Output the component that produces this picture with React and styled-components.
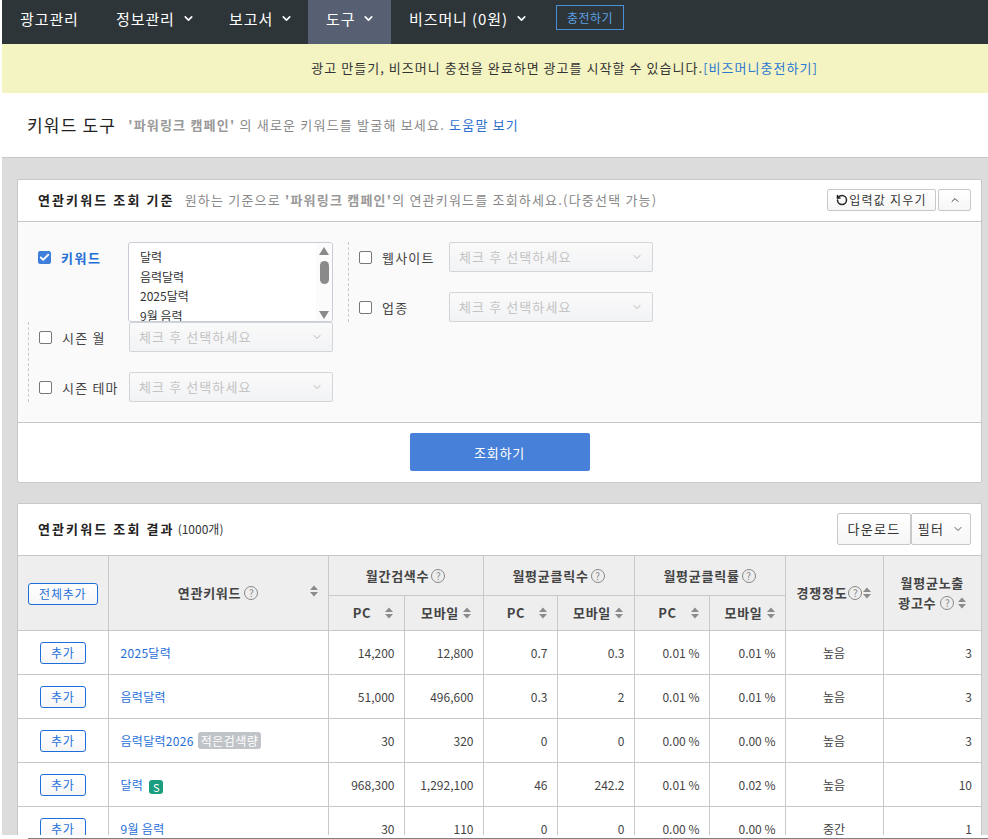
import React from "react";
import styled, { createGlobalStyle } from "styled-components";
import { ChevronDown, ChevronUp, RotateCcw, Check } from "lucide-react";

const GlobalStyle = createGlobalStyle`
  html, body {
    margin: 0;
    padding: 0;
    height: 839px;
    overflow: hidden;
    background: #fff;
    font-family: "Noto Sans CJK KR", "Liberation Sans", sans-serif;
    font-size: 13px;
    color: #333;
  }
  * { box-sizing: border-box; }
`;

const Page = styled.div`
  height: 839px;
  display: flex;
  flex-direction: column;
`;
const Main = styled.div`
  height: 835px;
  margin-left: 2px;
  background: #dcdcdc;
  overflow: hidden;
`;
const ScrollEdge = styled.div`
  height: 4px;
  margin-left: 28px;
  background: #fff;
  border-bottom: 1px solid #808080;
`;

const Nav = styled.nav`
  height: 44px;
  background: #2e3539;
  display: flex;
  align-items: stretch;
`;
const NavItem = styled.a`
  width: ${(p) => p.$width};
  display: flex;
  align-items: center;
  gap: 7px;
  padding: 0 0 8px 18px;
  color: #fff;
  font-size: 15px;
  letter-spacing: 0.9px;
  white-space: nowrap;
  background: ${(p) => (p.$active ? "#566072" : "transparent")};
`;
const ChargeButton = styled.a`
  align-self: flex-start;
  margin: 5px 0 0 0;
  width: 68px;
  height: 25px;
  border: 1px solid #4a90d9;
  color: #5aa2e6;
  font-size: 12px;
  letter-spacing: 0.5px;
  display: flex;
  align-items: center;
  justify-content: center;
`;

const Notice = styled.div`
  height: 49px;
  background: #f4f4c2;
  display: flex;
  align-items: center;
  justify-content: flex-end;
  padding: 0 170px 2px 0;
  font-size: 13px;
  letter-spacing: 1.04px;
  color: #333;
`;
const NoticeLink = styled.a`
  color: #2a78d2;
`;

const TitleBar = styled.div`
  height: 65px;
  background: #fff;
  border-bottom: 1px solid #c8c8c8;
  display: flex;
  align-items: center;
  padding: 0 0 2px 25px;
`;
const PageTitle = styled.h1`
  margin: 0 12px 0 0;
  font-size: 17px;
  font-weight: 400;
  color: #222;
  letter-spacing: 1.2px;
`;
const TitleDesc = styled.span`
  font-size: 13px;
  color: #888;
  letter-spacing: 1.2px;
`;
const Campaign = styled.b`
  color: #999;
  font-weight: 700;
`;
const HelpLink = styled.a`
  color: #2a6fd0;
`;

const Card = styled.section`
  margin: ${(p) => p.$margin};
  width: 965px;
  background: #fff;
  border: 1px solid #c8c8c8;
  border-radius: 2px;
`;
const CardHead = styled.div`
  height: ${(p) => p.$height};
  padding: 0 10px 2px 20px;
  display: flex;
  align-items: center;
`;
const CardTitle = styled.h2`
  margin: 0 10px 0 0;
  font-size: 13px;
  font-weight: 700;
  color: #222;
  letter-spacing: 2.1px;
`;
const Count = styled.span`
  margin-left: -7px;
  font-size: 12px;
  color: #333;
`;
const CardDesc = styled.span`
  font-size: 13px;
  color: #888;
  letter-spacing: 1.2px;
`;
const HeadActions = styled.div`
  margin-left: auto;
  display: flex;
  gap: ${(p) => p.$gap || "0"};
`;
const GhostButton = styled.button`
  height: ${(p) => p.$height || "22px"};
  width: ${(p) => p.$width};
  padding: 0;
  font: inherit;
  font-size: ${(p) => p.$size || "12px"};
  letter-spacing: 1.25px;
  color: #333;
  background: linear-gradient(#fff, #f6f6f6);
  border: 1px solid #c8c8c8;
  border-radius: 2px;
  display: flex;
  align-items: center;
  justify-content: center;
  gap: ${(p) => p.$gap || "1px"};
`;

const FormBody = styled.div`
  height: 202px;
  padding-top: 20px;
  background: #fafafa;
  border-top: 1px solid #c8c8c8;
  border-bottom: 1px solid #c8c8c8;
`;
const TopRow = styled.div`
  display: flex;
  padding-left: 20px;
`;
const KeywordField = styled.div`
  width: 295px;
  display: flex;
`;
const KeywordLabel = styled.label`
  width: 90px;
  height: 30px;
  display: flex;
  align-items: center;
  gap: 10px;
  font-weight: 700;
  letter-spacing: 1.6px;
  color: #1f6fd8;
`;
const ListBox = styled.div`
  width: 205px;
  height: 80px;
  background: #fff;
  border: 1px solid #c8ccd6;
  border-radius: 3px;
  display: flex;
  overflow: hidden;
`;
const ListItems = styled.div`
  flex: 1;
  padding: 4px 0 0 11px;
  font-size: 12px;
  line-height: 19.6px;
  color: #333;
`;
const ListItem = styled.div`
  white-space: nowrap;
`;
const ScrollTrack = styled.div`
  width: 16px;
  padding: 4px 0 2px;
  display: flex;
  flex-direction: column;
  align-items: center;
  background: #fbfbfb;
`;
const ScrollThumb = styled.div`
  width: 9px;
  height: 23px;
  margin-top: 6px;
  border-radius: 5px;
  background: #8a8a8a;
`;
const ScrollArrow = styled.svg`
  width: 10px;
  height: 8px;
  fill: #8a8a8a;
  margin-top: ${(p) => (p.$down ? "auto" : "0")};
`;
const DashedGroup = styled.div`
  margin-left: ${(p) => p.$left};
  padding-left: 10px;
  border-left: 1px dashed #c8c8c8;
  display: flex;
  flex-direction: column;
  gap: 20px;
`;
const FieldRow = styled.div`
  height: 30px;
  display: flex;
  align-items: center;
`;
const FieldLabel = styled.label`
  width: ${(p) => p.$width};
  display: flex;
  align-items: center;
  gap: 10px;
  letter-spacing: 1.2px;
  color: #444;
  white-space: nowrap;
`;
const Box = styled.span`
  width: 13px;
  height: 13px;
  border-radius: 2px;
  flex: none;
  display: flex;
  align-items: center;
  justify-content: center;
  background: ${(p) => (p.$checked ? "#3f7fdc" : "#fff")};
  border: 1px solid ${(p) => (p.$checked ? "#3f7fdc" : "#777")};
  color: #fff;
`;
const SelectBox = styled.div`
  width: 204px;
  height: 30px;
  padding: 0 9px 1px;
  border: 1px solid #d2d5da;
  border-radius: 2px;
  background: linear-gradient(#fafafa, #f2f3f5);
  color: #c4c4c4;
  font-size: 13px;
  letter-spacing: 1.1px;
  display: flex;
  align-items: center;
  justify-content: space-between;
`;
const CardFoot = styled.div`
  height: 59px;
  display: flex;
  align-items: flex-start;
  justify-content: center;
  padding-top: 10px;
`;
const SubmitButton = styled.button`
  width: 180px;
  height: 38px;
  border: 0;
  border-radius: 2px;
  background: #4680d8;
  color: #fff;
  font: inherit;
  font-size: 13px;
  letter-spacing: 0.8px;
`;

const Table = styled.table`
  width: 963px;
  table-layout: fixed;
  border-collapse: collapse;
  font-size: 12px;
`;
const Th = styled.th`
  position: relative;
  height: ${(p) => p.$height};
  padding: 0;
  background: #eeeeee;
  border: 1px solid #c8c8c8;
  border-left-width: ${(p) => (p.$first ? "0" : "1px")};
  border-right-width: ${(p) => (p.$last ? "0" : "1px")};
  color: #444;
  font-size: 13px;
  font-weight: 700;
  letter-spacing: 0.75px;
  line-height: 20px;
`;
const ThInner = styled.span`
  display: inline-flex;
  align-items: center;
  justify-content: center;
  gap: ${(p) => p.$gap || "2px"};
  padding-left: ${(p) => p.$shift || "0"};
`;
const Td = styled.td`
  height: 44px;
  padding: ${(p) => (p.$center ? "0" : p.$left ? "0 0 0 12px" : "0 9px 0 0")};
  text-align: ${(p) => (p.$center ? "center" : p.$left ? "left" : "right")};
  border: 1px solid #c8c8c8;
  border-left-width: ${(p) => (p.$first ? "0" : "1px")};
  border-right-width: ${(p) => (p.$last ? "0" : "1px")};
  color: #444;
  font-size: 12px;
`;
const AddButton = styled.button`
  width: ${(p) => p.$width};
  height: 22px;
  margin-top: ${(p) => p.$top || "0"};
  padding: 0;
  font: inherit;
  font-size: 12px;
  font-weight: 400;
  letter-spacing: 0.8px;
  color: #1f6fd8;
  background: linear-gradient(#fff, #f6f6f6);
  border: 1px solid #1f6fd8;
  border-radius: 3px;
`;
const KeywordLink = styled.a`
  color: #1f6fd8;
  letter-spacing: 0.3px;
`;
const LowBadge = styled.span`
  margin-left: 4px;
  padding: 0 3px;
  border-radius: 3px;
  background: #c0c4c8;
  color: #fff;
  font-size: 12px;
  letter-spacing: 0.5px;
`;
const SBadge = styled.span`
  display: inline-flex;
  align-items: center;
  justify-content: center;
  width: 14px;
  height: 14px;
  margin-left: 6px;
  border-radius: 3px;
  background: #1b9e7f;
  color: #fff;
  font-size: 11px;
  vertical-align: -2px;
`;
const HelpCircle = styled.span`
  flex: none;
  width: 14px;
  height: 14px;
  border: 1px solid #888;
  border-radius: 50%;
  color: #888;
  font-size: 10px;
  font-weight: 400;
  line-height: 12px;
  letter-spacing: 0;
  text-align: center;
`;
const SortSvg = styled.svg`
  flex: none;
  width: 8px;
  height: 12px;
  fill: #8b8b8b;
`;
const CornerSort = styled.span`
  position: absolute;
  right: ${(p) => p.$right};
  top: ${(p) => p.$top};
  line-height: 0;
`;

const Sort = () => (
  <SortSvg viewBox="0 0 8 12">
    <path d="M4 0.5 8 5H0zM0 7h8l-4 4.5z" />
  </SortSvg>
);

const rows = [
  ["2025달력", null, "14,200", "12,800", "0.7", "0.3", "0.01 %", "0.01 %", "높음", "3"],
  ["음력달력", null, "51,000", "496,600", "0.3", "2", "0.01 %", "0.01 %", "높음", "3"],
  ["음력달력2026", "low", "30", "320", "0", "0", "0.00 %", "0.00 %", "높음", "3"],
  ["달력", "s", "968,300", "1,292,100", "46", "242.2", "0.01 %", "0.02 %", "높음", "10"],
  ["9월 음력", null, "30", "110", "0", "0", "0.00 %", "0.00 %", "중간", "1"],
];

const colWidths = [90, 220, 76, 79, 74, 77, 75, 76, 98, 98];

function Field({ label, width }) {
  return (
    <FieldRow>
      <FieldLabel $width={width}>
        <Box />
        {label}
      </FieldLabel>
      <SelectBox>
        체크 후 선택하세요
        <ChevronDown size={12} color="#b5b5b5" />
      </SelectBox>
    </FieldRow>
  );
}

export default function App() {
  return (
    <Page>
      <GlobalStyle />
      <Main>
        <Nav>
          <NavItem $width="96px">광고관리</NavItem>
          <NavItem $width="113px">
            정보관리 <ChevronDown size={13} strokeWidth={3} />
          </NavItem>
          <NavItem $width="97px">
            보고서 <ChevronDown size={13} strokeWidth={3} />
          </NavItem>
          <NavItem $active $width="83px">
            도구 <ChevronDown size={13} strokeWidth={3} />
          </NavItem>
          <NavItem $width="165px">
            비즈머니 (0원) <ChevronDown size={13} strokeWidth={3} />
          </NavItem>
          <ChargeButton>충전하기</ChargeButton>
        </Nav>
        <Notice>
          광고 만들기, 비즈머니 충전을 완료하면 광고를 시작할 수 있습니다.
          <NoticeLink>[비즈머니충전하기]</NoticeLink>
        </Notice>
        <TitleBar>
          <PageTitle>키워드 도구</PageTitle>
          <TitleDesc>
            <Campaign>'파워링크 캠페인'</Campaign> 의 새로운 키워드를 발굴해 보세요.{" "}
            <HelpLink>도움말 보기</HelpLink>
          </TitleDesc>
        </TitleBar>

        <Card $margin="21px 0 0 15px">
          <CardHead $height="41px">
            <CardTitle>연관키워드 조회 기준</CardTitle>
            <CardDesc>
              원하는 기준으로 <Campaign>'파워링크 캠페인'</Campaign>의 연관키워드를 조회하세요.(다중선택 가능)
            </CardDesc>
            <HeadActions $gap="2px">
              <GhostButton $width="109px">
                <RotateCcw size={12} strokeWidth={3} color="#222" />
                입력값 지우기
              </GhostButton>
              <GhostButton $width="33px">
                <ChevronUp size={12} color="#444" />
              </GhostButton>
            </HeadActions>
          </CardHead>
          <FormBody>
            <TopRow>
              <KeywordField>
                <KeywordLabel>
                  <Box $checked>
                    <Check size={11} strokeWidth={4} />
                  </Box>
                  키워드
                </KeywordLabel>
                <ListBox>
                  <ListItems>
                    <ListItem>달력</ListItem>
                    <ListItem>음력달력</ListItem>
                    <ListItem>2025달력</ListItem>
                    <ListItem>9월 음력</ListItem>
                  </ListItems>
                  <ScrollTrack>
                    <ScrollArrow viewBox="0 0 10 8">
                      <path d="M5 0 10 8H0z" />
                    </ScrollArrow>
                    <ScrollThumb />
                    <ScrollArrow viewBox="0 0 10 8" $down>
                      <path d="M0 0h10L5 8z" />
                    </ScrollArrow>
                  </ScrollTrack>
                </ListBox>
              </KeywordField>
              <DashedGroup $left="15px">
                <Field label="웹사이트" width="90px" />
                <Field label="업종" width="90px" />
              </DashedGroup>
            </TopRow>
            <DashedGroup $left="10px">
              <Field label="시즌 월" width="90px" />
              <Field label="시즌 테마" width="90px" />
            </DashedGroup>
          </FormBody>
          <CardFoot>
            <SubmitButton>조회하기</SubmitButton>
          </CardFoot>
        </Card>

        <Card $margin="20px 0 0 15px">
          <CardHead $height="51px">
            <CardTitle>연관키워드 조회 결과</CardTitle>
            <Count>(1000개)</Count>
            <HeadActions>
              <GhostButton $width="74px" $height="32px" $size="13px">
                다운로드
              </GhostButton>
              <GhostButton $width="60px" $height="32px" $gap="8px" $size="13px">
                필터 <ChevronDown size={12} color="#555" />
              </GhostButton>
            </HeadActions>
          </CardHead>
          <Table>
            <colgroup>
              {colWidths.map((w, i) => (
                <col key={i} width={w} />
              ))}
            </colgroup>
            <thead>
              <tr>
                <Th rowSpan={2} $first>
                  <AddButton $width="70px" $top="2px">
                    전체추가
                  </AddButton>
                </Th>
                <Th rowSpan={2}>
                  <ThInner $gap="3px">
                    연관키워드 <HelpCircle>?</HelpCircle>
                  </ThInner>
                  <CornerSort $right="10px" $top="29px">
                    <Sort />
                  </CornerSort>
                </Th>
                <Th colSpan={2} $height="40px">
                  <ThInner>
                    월간검색수 <HelpCircle>?</HelpCircle>
                  </ThInner>
                </Th>
                <Th colSpan={2}>
                  <ThInner>
                    월평균클릭수 <HelpCircle>?</HelpCircle>
                  </ThInner>
                </Th>
                <Th colSpan={2}>
                  <ThInner>
                    월평균클릭률 <HelpCircle>?</HelpCircle>
                  </ThInner>
                </Th>
                <Th rowSpan={2}>
                  <ThInner $gap="1px">
                    경쟁정도 <HelpCircle>?</HelpCircle>
                    <Sort />
                  </ThInner>
                </Th>
                <Th rowSpan={2} $last>
                  월평균노출
                  <br />
                  <ThInner $gap="4px" $shift="0">
                    광고수 <HelpCircle>?</HelpCircle>
                    <Sort />
                  </ThInner>
                </Th>
              </tr>
              <tr>
                {["PC", "모바일", "PC", "모바일", "PC", "모바일"].map((h, i) => (
                  <Th key={i} $height="35px">
                    <ThInner $gap={h === "PC" ? "14px" : "4px"} $shift={h === "PC" ? "14px" : "5px"}>
                      {h}
                      <Sort />
                    </ThInner>
                  </Th>
                ))}
              </tr>
            </thead>
            <tbody>
              {rows.map((r) => (
                <tr key={r[0]}>
                  <Td $center $first>
                    <AddButton $width="46px">추가</AddButton>
                  </Td>
                  <Td $left>
                    <KeywordLink>{r[0]}</KeywordLink>
                    {r[1] === "low" && <LowBadge>적은검색량</LowBadge>}
                    {r[1] === "s" && <SBadge>S</SBadge>}
                  </Td>
                  {r.slice(2, 8).map((v, i) => (
                    <Td key={i}>{v}</Td>
                  ))}
                  <Td $center>{r[8]}</Td>
                  <Td $last>{r[9]}</Td>
                </tr>
              ))}
            </tbody>
          </Table>
        </Card>
      </Main>
      <ScrollEdge />
    </Page>
  );
}
